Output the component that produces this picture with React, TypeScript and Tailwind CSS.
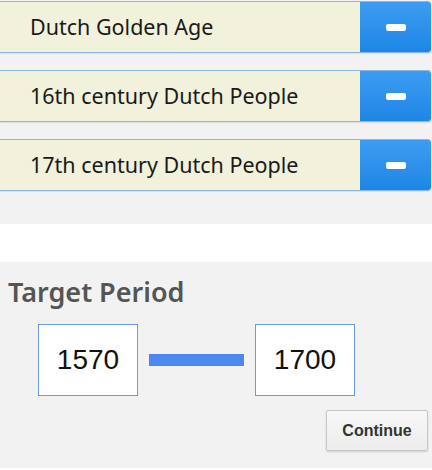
const topics = [
  "Dutch Golden Age",
  "16th century Dutch People",
  "17th century Dutch People",
];

const TopicRow: React.FC<{ label: string }> = ({ label }) => {
  return (
    <div className="flex h-[52px] w-[431px] rounded-r-[3px] border-y border-[#8ab8e2] shadow-[0_1px_1px_rgba(0,0,0,0.08)]">
      <div className="flex flex-1 items-center bg-[#f1f1dc] pl-[30px] text-[21.5px] text-[#1a1a1a] [font-family:'Noto_Sans',sans-serif]">
        {label}
      </div>
      <button className="flex w-[71px] items-center justify-center rounded-r-[3px] bg-gradient-to-b from-[#3d9cf2] to-[#1c86e4]">
        <span className="block h-[7px] w-[20px] rounded-[2px] bg-white" />
      </button>
    </div>
  );
};

const YearBox: React.FC<{ value: string }> = ({ value }) => {
  return (
    <div className="flex h-[72px] w-[100px] items-center justify-center border border-[#6a9ae8] bg-white text-[28px] text-[#111] [font-family:'Liberation_Sans',Arial,sans-serif]">
      {value}
    </div>
  );
};

export default function App() {
  return (
    <div className="h-[470px] w-[432px] bg-white">
      <div className="flex flex-col gap-[17px] bg-[#f2f2f2] pb-[33px] pt-px">
        {topics.map((t) => (
          <TopicRow key={t} label={t} />
        ))}
      </div>
      <div className="mt-[38px] h-[206px] bg-[#f2f2f2] pt-[11px]">
        <h2 className="pl-[8px] text-[27px] font-semibold leading-[38px] text-[#555] [font-family:'Noto_Sans',sans-serif]">
          Target Period
        </h2>
        <div className="mt-[13px] flex items-center pl-[38px]">
          <YearBox value="1570" />
          <div className="mx-[11px] h-[12px] w-[95px] bg-[#4d88f0]" />
          <YearBox value="1700" />
        </div>
        <div className="mt-[14px] flex justify-end pr-[4px]">
          <button className="h-[41px] w-[102px] rounded-[2px] border border-[#c8c8c8] bg-gradient-to-b from-[#f8f8f8] to-[#ececec] text-[16px] font-bold text-[#333] shadow-[0_1px_2px_rgba(0,0,0,0.15)] [font-family:'Liberation_Sans',Arial,sans-serif]">
            Continue
          </button>
        </div>
      </div>
    </div>
  );
}
